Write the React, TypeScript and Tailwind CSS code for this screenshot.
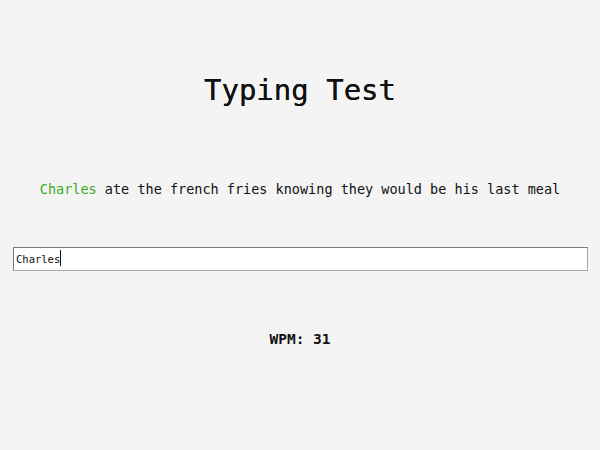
import { useState } from "react";

const sentence = "Charles ate the french fries knowing they would be his last meal";

const App = () => {
  const [typed, setTyped] = useState("Charles");
  const words = sentence.split(" ");
  const typedWords = typed.trim().split(" ").filter(Boolean);

  return (
    <div className="min-h-[450px] w-full bg-[#f4f4f4] text-[#111] font-['DejaVu_Sans_Mono','Liberation_Mono',monospace] flex flex-col items-center">
      <h1 className="mt-[72px] text-[29px] leading-[36px] font-medium [text-shadow:0_0_0.4px_#111]">Typing Test</h1>

      <p className="mt-[71px] text-[13.5px] leading-[20px]">
        {words.map((w, i) => (
          <span key={i} className={typedWords[i] === w ? "text-[#3aab1f]" : ""}>
            {w}
            {i < words.length - 1 ? " " : ""}
          </span>
        ))}
      </p>

      <div className="mt-[47px] w-full px-[13px] pr-[12px]">
        <div className="relative">
          <input
            value={typed}
            onChange={(e) => setTyped(e.target.value)}
            className="w-full h-[24px] bg-white px-[2px] text-[10.5px] outline-none border border-t-[#7a7a7a] border-l-[#7a7a7a] border-b-[#a9a9a9] border-r-[#a9a9a9] font-['DejaVu_Sans_Mono',monospace]"
          />
          {/* caret */}
          <span className="absolute left-[47px] top-[4px] h-[16px] w-px bg-[#111]" />
        </div>
      </div>

      <div className="mt-[58px] text-[14.5px] leading-[20px] font-bold">WPM: 31</div>
    </div>
  );
};

export default App;
